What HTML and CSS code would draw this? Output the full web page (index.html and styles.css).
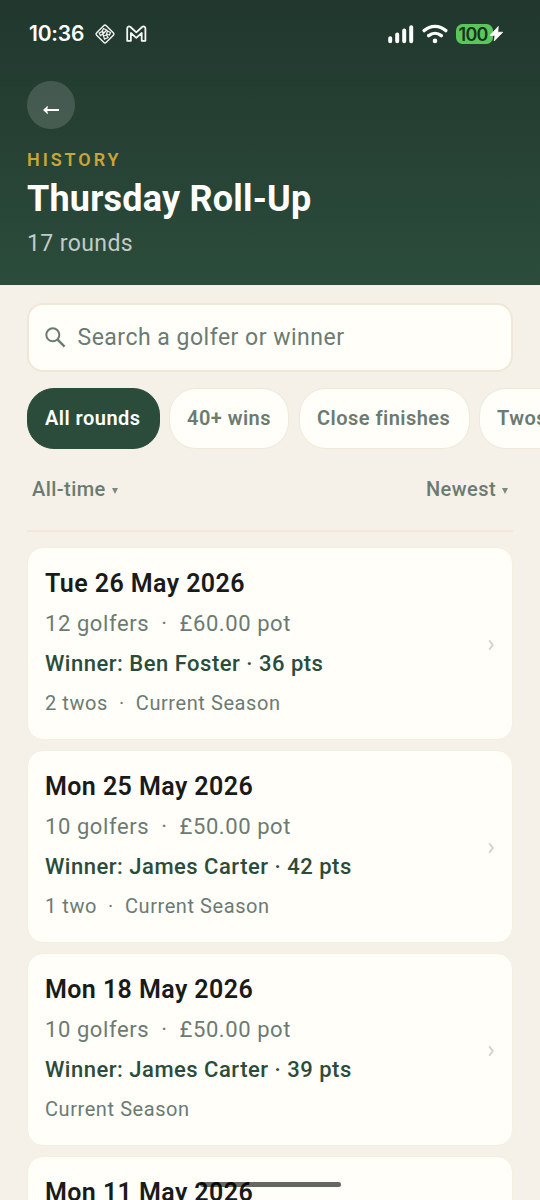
FILE: index.html
```html
<!DOCTYPE html>
<html lang="en">
<head>
<meta charset="utf-8">
<meta name="viewport" content="width=device-width, initial-scale=1">
<title>Thursday Roll-Up</title>
<link rel="stylesheet" href="styles.css">
</head>
<body>
<div class="screen">
  <header class="hero">
    <div class="status">
      <div class="status-left">
        <span class="clock">10:36</span>
        <svg class="diamond" width="22" height="22" viewBox="0 0 22 22" fill="none" stroke="#eef2ef"><rect x="4.2" y="4.2" width="13.6" height="13.6" rx="1.8" stroke-width="1.5" transform="rotate(45 11 11)"/><path d="M9.5 5.5l3 1.5-2 2.5-2.5-1zM5.2 10l3-1.5L9 11l-2.5 1.5zM13.5 8l3 1.5-1 2.5-3-1zM9.5 13l3-1 1.5 2.5-3.5 1.5zM10.5 9.5L9 11l.5 2M12.5 7l1 1M12.5 11v1" stroke-width="1.3"/></svg>
        <svg class="mail" width="22" height="18" viewBox="0 0 22 18" fill="none" stroke="#f4f7f5" stroke-width="1.8" stroke-linejoin="round"><path d="M1.2 15.8V3.4C1.2 1.3 3.2 1 4.5 2L10.3 7.4l5.8-5.4c1.3-1 3.3-.7 3.3 1.4v12.4h-3.7V8L10.3 12.8 4.9 8v7.8z"/></svg>
      </div>
      <div class="status-right">
        <svg width="26" height="20" viewBox="0 0 26 20" stroke="#fff" stroke-width="4" stroke-linecap="round"><path d="M2.2 14.2v3M9.2 10.4v6.8M16.2 6.4v10.8M23.2 3.2v14"/></svg>
        <svg width="26" height="20" viewBox="0 0 26 20" fill="none" stroke="#fff" stroke-width="3.4" stroke-linecap="round"><path d="M2.2 6.6C8.4 .9 17.6 .9 23.8 6.6M6.7 11.6c3.7-3 8.9-3 12.6 0"/><circle cx="13" cy="16.9" r="2.3" fill="#fff" stroke="none"/></svg>
        <div class="battery"><span>100</span>
          <svg class="bolt" width="15" height="18" viewBox="0 0 15 18"><path d="M9.3 1.4L1 10.4h5L5.2 16 13.8 7.2H8.8z" fill="#fff" stroke="#fff" stroke-width=".7" stroke-linejoin="round"/></svg>
        </div>
      </div>
    </div>
    <div class="back"><svg width="18" height="10" viewBox="0 0 18 10" fill="none" stroke="#fff" stroke-width="2"><path d="M17 5H3"/><path d="M5.4 1.5L1.6 5l3.8 3.5L4.5 5z" fill="#fff" stroke-width="1"/></svg></div>
    <div class="eyebrow">HISTORY</div>
    <h1 class="title">Thursday Roll-Up</h1>
    <div class="count">17 rounds</div>
  </header>

  <main class="content">
    <div class="search">
      <svg width="21" height="21" viewBox="0 0 21 21" fill="none" stroke="#6b7b72" stroke-width="2"><circle cx="7.8" cy="7.8" r="6.5"/><path d="M12.4 12.4l7.2 7.2" stroke-width="2.3"/></svg>
      <span>Search a golfer or winner</span>
    </div>
    <div class="chips">
      <div class="chip chip-active"><span>All rounds</span></div>
      <div class="chip chip-wins"><span>40+ wins</span></div>
      <div class="chip chip-close"><span>Close finishes</span></div>
      <div class="chip chip-twos"><span>Twos</span></div>
    </div>
    <div class="filters">
      <div class="filter"><span>All-time</span><i class="caret"></i></div>
      <div class="filter"><span>Newest</span><i class="caret"></i></div>
    </div>
    <div class="list">
      <article class="card">
        <div class="body">
          <h2 class="date">Tue 26 May 2026</h2>
          <div class="meta">12 golfers &nbsp;·&nbsp; £60.00 pot</div>
          <div class="winner">Winner: Ben Foster · 36 pts</div>
          <div class="season">2 twos &nbsp;·&nbsp; Current Season</div>
        </div>
        <svg class="chevron" width="7" height="12" viewBox="0 0 7 12"><path d="M1.2 1.2L4.8 6 1.2 10.8"/></svg>
      </article>
      <article class="card">
        <div class="body">
          <h2 class="date">Mon 25 May 2026</h2>
          <div class="meta">10 golfers &nbsp;·&nbsp; £50.00 pot</div>
          <div class="winner">Winner: James Carter · 42 pts</div>
          <div class="season">1 two &nbsp;·&nbsp; Current Season</div>
        </div>
        <svg class="chevron" width="7" height="12" viewBox="0 0 7 12"><path d="M1.2 1.2L4.8 6 1.2 10.8"/></svg>
      </article>
      <article class="card">
        <div class="body">
          <h2 class="date">Mon 18 May 2026</h2>
          <div class="meta">10 golfers &nbsp;·&nbsp; £50.00 pot</div>
          <div class="winner">Winner: James Carter · 39 pts</div>
          <div class="season">Current Season</div>
        </div>
        <svg class="chevron" width="7" height="12" viewBox="0 0 7 12"><path d="M1.2 1.2L4.8 6 1.2 10.8"/></svg>
      </article>
      <article class="card">
        <div class="body">
          <h2 class="date">Mon 11 May 2026</h2>
        </div>
      </article>
    </div>
  </main>
  <div class="home-bar"></div>
</div>
</body>
</html>
```
FILE: styles.css
```css
* { box-sizing: border-box; }
body { margin: 0; font-family: Roboto, "Liberation Sans", sans-serif; background: #f5f0e8; }
.screen { position: relative; width: 540px; height: 1200px; overflow: hidden; background: #f5f0e8; }
svg { display: block; flex: none; }

.hero { height: 284.5px; padding: 0 27px; background: linear-gradient(180deg, #21372d 0%, #2b4c3b 100%); color: #fff; }
.status { display: flex; justify-content: space-between; height: 81px; padding: 20px 9.5px 0 2px; }
.status-left, .status-right { display: flex; align-items: center; height: 28px; }
.clock { font: 600 21px/30px Inter, sans-serif; letter-spacing: -0.2px; width: 65px; white-space: nowrap; }
.diamond { margin-right: 10px; }
.status-right { gap: 8px; }
.battery { position: relative; width: 48px; height: 21px; }
.battery span { display: block; width: 37px; height: 20.5px; padding-left: 3px; border-radius: 6.5px; background: #5ac759; color: #16351d; font: 600 18px/21px Inter, sans-serif; letter-spacing: -0.7px; }
.bolt { position: absolute; left: 33px; top: 1.5px; }

.back { display: flex; align-items: center; justify-content: center; width: 47.5px; height: 48px; padding-top: 10px; border-radius: 50%; background: rgba(255, 255, 255, 0.15); }
.eyebrow { margin-top: 19px; font-size: 18px; line-height: 24px; font-weight: 600; letter-spacing: 2.9px; color: #c9a53a; }
.title { margin: 5px 0 0; font-size: 36px; line-height: 44px; font-weight: 700; letter-spacing: 0.2px; }
.count { margin-top: 9px; font-size: 23px; line-height: 28px; letter-spacing: 0.4px; color: rgba(255, 255, 255, 0.72); }

.content { padding: 18.5px 27px 0; }
.search { display: flex; align-items: center; gap: 12px; height: 68.5px; padding: 0 17px 0 16px; border: 2px solid #efe8d6; border-radius: 16px; background: #fffef9; color: #6b7b72; font-size: 23px; letter-spacing: 0.5px; }
.search svg { margin-left: -0.5px; }
.search span { padding-top: 1px; }
.chips { display: flex; gap: 10px; margin: 16px -27px 0 0; overflow: hidden; }
.chip { flex: none; display: flex; align-items: center; height: 61px; padding: 0 17px; border: 1.5px solid #f0e9da; border-radius: 27px; background: #fffef9; color: #6b7b72; font-size: 20px; font-weight: 600; letter-spacing: 0.47px; white-space: nowrap; }
.chip-active { width: 133px; margin-right: -1px; border-color: #2b4c3b; background: #2b4c3b; color: #fff; }
.chip-wins { width: 120px; }
.chip-close { width: 171px; margin-right: -1px; }
.chip-twos { width: 90px; }

.filters { display: flex; justify-content: space-between; height: 83px; padding: 25.5px 5px 0; border-bottom: 2px solid #efe9da; color: #6b7b72; font-size: 20px; line-height: 30px; font-weight: 500; letter-spacing: 0.45px; }
.filter { display: flex; align-items: center; height: 30px; gap: 6px; }
.caret { border: 3px solid transparent; border-top: 6px solid #7b8981; border-bottom: 0; margin-top: 3px; }

.list { display: flex; flex-direction: column; gap: 10px; margin-top: 15px; }
.card { display: flex; align-items: center; justify-content: space-between; height: 193px; padding: 0 17px; border: 1px solid #f5efdf; border-radius: 16px; background: #fffef9; }
.body { height: 191px; padding-top: 17px; }
.date { margin: 0; font-size: 25px; line-height: 38px; font-weight: 600; letter-spacing: 0.42px; color: #1a1a1a; }
.meta, .winner, .season { white-space: nowrap; line-height: 40px; color: #6b7b72; }
.meta { margin-top: 1px; font-size: 22px; letter-spacing: 0.58px; }
.winner { font-size: 22px; line-height: 39px; font-weight: 500; letter-spacing: 0.5px; color: #2b4c3b; }
.season { font-size: 20px; letter-spacing: 0.57px; }
.chevron { margin-top: 4px; fill: none; stroke: #d0d3cd; stroke-width: 1.9; }

.home-bar { position: absolute; left: 200px; top: 1182px; width: 141px; height: 5px; border-radius: 3px; background: rgba(0, 0, 0, 0.6); }
```
